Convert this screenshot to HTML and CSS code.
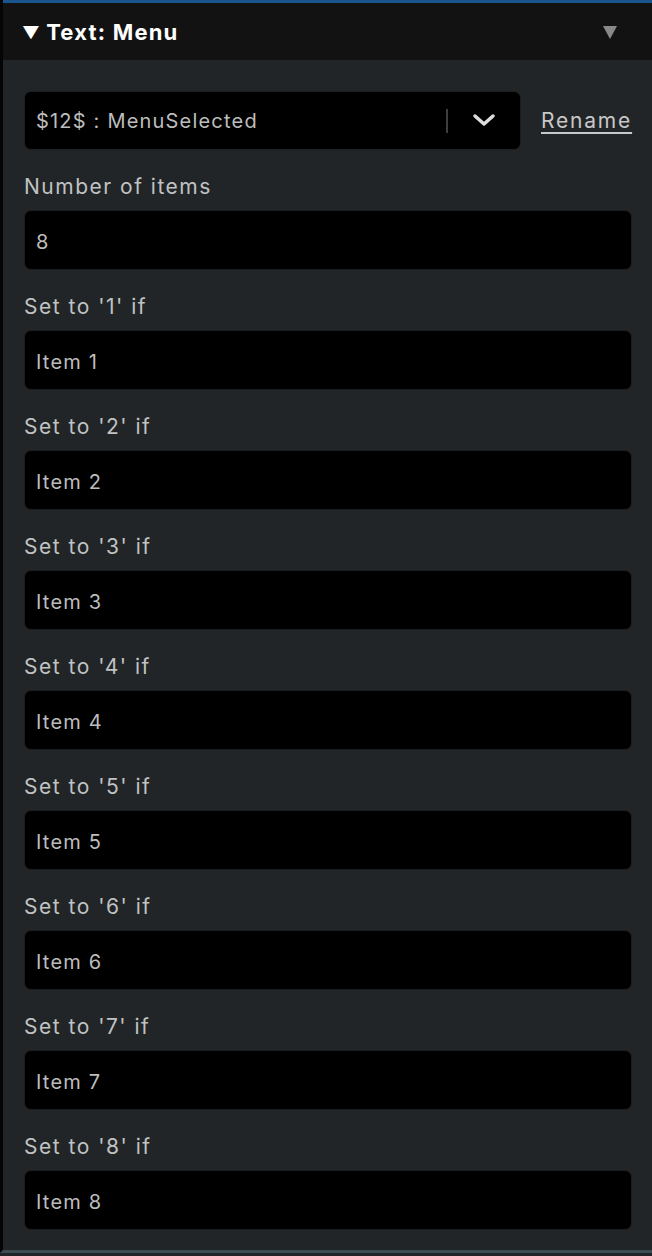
FILE: index.html
```html
<!DOCTYPE html>
<html lang="en">
<head>
<meta charset="UTF-8" />
<title>Text: Menu</title>
<link rel="stylesheet" href="styles.css">
</head>
<body>
  <div class="panel">
    <div class="panel-header">
      <span class="title"><span class="caret">&#9660;</span> Text: Menu</span>
      <span class="collapse"></span>
    </div>
    <div class="panel-body">
      <div class="var-row">
        <div class="select">
          <span class="select-value">$12$ : MenuSelected</span>
          <span class="select-sep"></span>
          <svg class="chevron" width="24" height="16" viewBox="0 0 24 16">
            <path d="M3 3 L12 11 L21 3" fill="none" stroke="#ddd" stroke-width="3.5" stroke-linecap="round" stroke-linejoin="round"/>
          </svg>
        </div>
        <a class="rename" href="#">Rename</a>
      </div>

      <label class="field-label">Number of items</label>
      <div class="field">8</div>

      <label class="field-label">Set to '1' if</label>
      <div class="field">Item 1</div>
      <label class="field-label">Set to '2' if</label>
      <div class="field">Item 2</div>
      <label class="field-label">Set to '3' if</label>
      <div class="field">Item 3</div>
      <label class="field-label">Set to '4' if</label>
      <div class="field">Item 4</div>
      <label class="field-label">Set to '5' if</label>
      <div class="field">Item 5</div>
      <label class="field-label">Set to '6' if</label>
      <div class="field">Item 6</div>
      <label class="field-label">Set to '7' if</label>
      <div class="field">Item 7</div>
      <label class="field-label">Set to '8' if</label>
      <div class="field">Item 8</div>
    </div>
  </div>
</body>
</html>
```

FILE: styles.css
```css
* {
  box-sizing: border-box;
}
body {
  margin: 0;
  background: #212527;
  font-family: Inter, Roboto, 'Liberation Sans', sans-serif;
  color: #c4c6c7;
}
.panel {
  border-left: 3px solid #050505;
  background: #212527;
  border-bottom: 3px solid #3b4d53;
  height: 1253px;
}
.panel-header {
  height: 60px;
  background: #121212;
  border-top: 3px solid #1a568d;
  display: flex;
  align-items: center;
  justify-content: space-between;
  padding: 0 35px 0 19px;
}
.title {
  color: #fff;
  font-weight: 700;
  font-size: 22px;
  letter-spacing: 1.2px;
}
.caret {
  font-size: 17px;
  letter-spacing: 0;
  position: relative;
  top: -1px;
}
.collapse {
  width: 0;
  height: 0;
  border-left: 7px solid transparent;
  border-right: 7px solid transparent;
  border-top: 13px solid #888;
  margin-top: 2px;
}
.panel-body {
  padding: 31px 20px 0 21px;
  display: flex;
  flex-direction: column;
}
.var-row {
  display: flex;
  align-items: center;
  gap: 20px;
}
.select {
  flex: 0 0 497px;
  height: 59px;
  background: #000;
  border: 1px solid #1e1e1e;
  border-radius: 7px;
  display: flex;
  align-items: center;
  padding: 0 24px 0 11px;
  font-size: 20px;
  letter-spacing: 1.2px;
  color: #bdbdbd;
}
.select-value {
  flex: 1;
}
.select-sep {
  width: 2px;
  height: 24px;
  background: #3e3e3e;
  margin-right: 24px;
}
.rename {
  color: #c8c8c8;
  font-size: 21px;
  letter-spacing: 1.8px;
  text-decoration: underline;
  text-underline-offset: 4px;
}
.field-label {
  display: block;
  height: 60px;
  padding-top: 24px;
  font-size: 21px;
  letter-spacing: 1.5px;
  color: #c0c2c3;
}
.field {
  height: 60px;
  background: #000;
  border: 1px solid #1c1c1c;
  border-radius: 7px;
  display: flex;
  align-items: center;
  padding: 3px 11px 0;
  font-size: 20px;
  letter-spacing: 1.2px;
  color: #bdbdbd;
}
```
